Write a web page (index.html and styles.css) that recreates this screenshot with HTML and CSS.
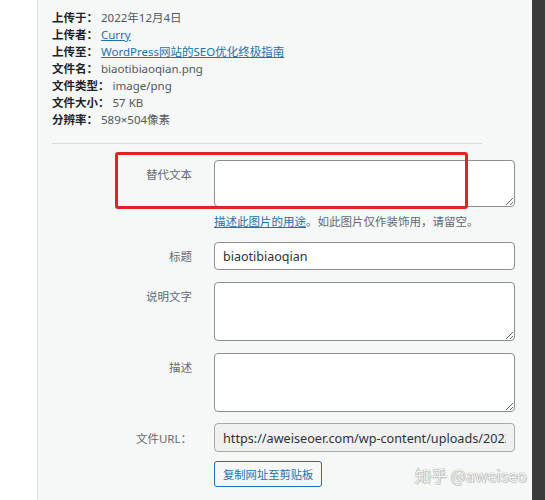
FILE: index.html
```html
<!DOCTYPE html>
<html lang="zh-CN">
<head>
<meta charset="utf-8">
<title>附件详情</title>
<link rel="stylesheet" href="styles.css">
</head>
<body>
<div class="page">
  <div class="gutter"></div>
  <div class="panel">
    <div class="meta">
      <div class="meta-row"><strong>上传于：</strong> 2022年12月4日</div>
      <div class="meta-row"><strong>上传者：</strong> <a href="#">Curry</a></div>
      <div class="meta-row"><strong>上传至：</strong> <a href="#">WordPress网站的SEO优化终极指南</a></div>
      <div class="meta-row"><strong>文件名：</strong> biaotibiaoqian.png</div>
      <div class="meta-row"><strong>文件类型：</strong> image/png</div>
      <div class="meta-row"><strong>文件大小：</strong> 57 KB</div>
      <div class="meta-row"><strong>分辨率：</strong> 589×504像素</div>
    </div>
    <div class="sep"></div>
    <div class="form">
      <div class="row row-alt">
        <label class="label">替代文本</label>
        <textarea class="field ta-alt"></textarea>
      </div>
      <p class="help"><a href="#">描述此图片的用途</a>。如此图片仅作装饰用，请留空。</p>
      <div class="row row-title">
        <label class="label">标题</label>
        <input class="field in-title" type="text" value="biaotibiaoqian">
      </div>
      <div class="row row-gap">
        <label class="label">说明文字</label>
        <textarea class="field ta-big"></textarea>
      </div>
      <div class="row row-gap">
        <label class="label">描述</label>
        <textarea class="field ta-big"></textarea>
      </div>
      <div class="row row-url">
        <label class="label label-url">文件URL：</label>
        <input class="field in-url" type="text" readonly value="https://aweiseoer.com/wp-content/uploads/2022/12/biaotibiaoqian.png">
      </div>
      <div class="row row-btn">
        <span class="label"></span>
        <button class="btn" type="button">复制网址至剪贴板</button>
      </div>
    </div>
    <div class="annot"></div>
    <div class="watermark">知乎 @aweiseo</div>
  </div>
  <div class="dark"></div>
</div>
</body>
</html>
```
FILE: styles.css
```css
html, body {
  margin: 0;
  padding: 0;
  background: #fff;
}
body {
  font-family: "Noto Sans", "Noto Sans CJK SC", sans-serif;
  color: #3c434a;
}
.page {
  display: flex;
  width: 545px;
  height: 500px;
  overflow: hidden;
}
.gutter {
  width: 37px;
  flex: none;
  background: #fff;
}
.panel {
  position: relative;
  flex: 1;
  background: #f6f7f7;
  border-left: 1px solid #dcdcde;
  border-right: 1px solid #fcfcfc;
  overflow: hidden;
}
.dark {
  width: 13px;
  flex: none;
  background: #3b3b3b;
}
.meta {
  padding: 9px 0 0 14px;
  font-size: 11.5px;
  line-height: 17px;
  color: #50575e;
}
.meta strong {
  color: #1d2327;
  font-weight: 700;
}
.meta a {
  color: #2271b1;
  text-decoration: underline;
}
.sep {
  margin: 15px 0 0 14px;
  width: 430px;
  height: 0;
  border-top: 1px solid #dcdcde;
}
.form {
  margin-top: 16px;
}
.row {
  display: flex;
  align-items: flex-start;
  gap: 22px;
}
.label {
  width: 154px;
  flex: none;
  text-align: right;
  padding-top: 7px;
  font-size: 11.5px;
  line-height: 16px;
  color: #646970;
}
.label-url {
  padding-top: 8px;
}
.field {
  box-sizing: border-box;
  width: 301px;
  margin: 0;
  border: 1px solid #8c8f94;
  border-radius: 4px;
  background: #fff;
  font-family: "Noto Sans", "Noto Sans CJK SC", sans-serif;
  font-size: 12.5px;
  color: #2c3338;
  padding: 0 8px;
  outline: none;
}
textarea.field {
  display: block;
  padding: 4px 8px;
  resize: vertical;
}
.ta-alt {
  height: 47px;
}
.ta-big {
  height: 59px;
}
.in-title {
  height: 28px;
}
.in-url {
  height: 29px;
  background: #f0f0f1;
  border-color: #a7aaad;
  color: #2c3338;
  font-size: 12.65px;
}
.help {
  margin: 7px 0 0 176px;
  font-size: 11.5px;
  line-height: 16px;
  color: #646970;
}
.help a {
  color: #2271b1;
  text-decoration: underline;
}
.row-title {
  margin-top: 12px;
}
.row-gap {
  margin-top: 12px;
}
.row-url {
  margin-top: 11px;
}
.row-btn {
  margin-top: 9px;
}
.row-btn .label {
  padding-top: 0;
}
.btn {
  height: 26px;
  padding: 0 8px;
  border: 1px solid #2271b1;
  border-radius: 3px;
  background: #f6f7f7;
  color: #2271b1;
  font-family: "Noto Sans CJK SC", sans-serif;
  font-size: 11.3px;
  line-height: 24px;
}
.annot {
  position: absolute;
  left: 77px;
  top: 152px;
  width: 353px;
  height: 57px;
  box-sizing: border-box;
  border: 3px solid #e2231f;
  border-radius: 3px;
}
.watermark {
  position: absolute;
  left: 377px;
  top: 465px;
  font-family: "Noto Sans CJK SC", sans-serif;
  font-size: 16px;
  line-height: 20px;
  white-space: nowrap;
  color: #f4f4f4;
  text-shadow: 0 0 1px #9a9a9a, 0 0 1px #9a9a9a, 1px 1px 1px rgba(0,0,0,0.15);
}
```
